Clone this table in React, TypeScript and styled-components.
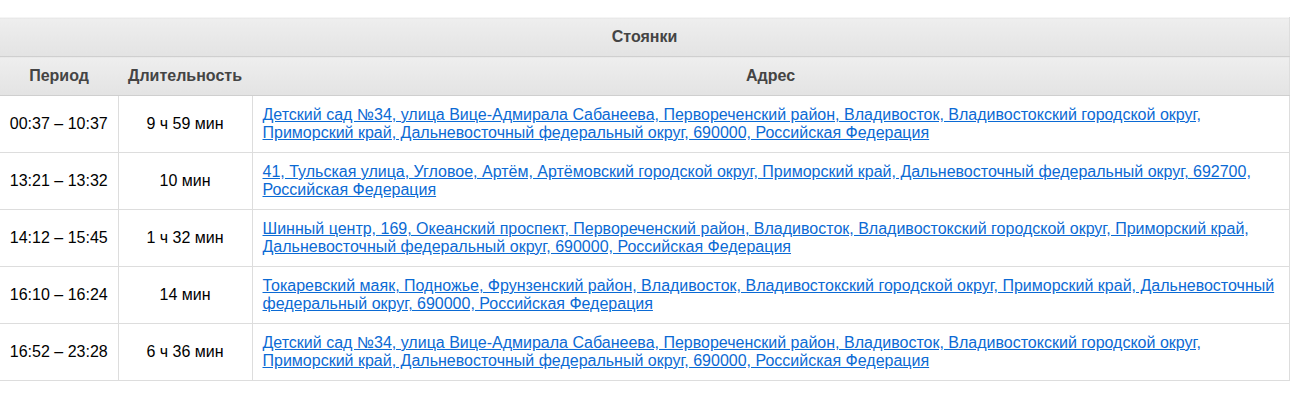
import React from "react";
import styled, { createGlobalStyle } from "styled-components";

const Global = createGlobalStyle`
  html, body { margin: 0; padding: 0; background: #fff; }
  body { font-family: "Liberation Sans", Arial, sans-serif; font-size: 16px; color: #000; }
`;

const Wrap = styled.div`
  padding-top: 17px;
  width: 1290px;
`;

const Table = styled.table`
  width: 100%;
  border-collapse: collapse;
  table-layout: fixed;
  font-family: "Liberation Sans", Arial, sans-serif;
  font-size: 16px;
  line-height: 18px;
`;

const HeadCell = styled.th`
  background: linear-gradient(#eeeeee, #e3e3e3);
  color: #444;
  font-weight: bold;
  font-size: 16px;
  text-align: center;
  padding: 10px 4px;
  height: 18px;
  white-space: nowrap;
  border-bottom: 1px solid #cfcfcf;
  border-top: 1px solid #f5f5f5;
  &:last-child { border-right: 1px solid #dddddd; }
`;

const Cell = styled.td<{ $address?: boolean }>`
  padding: ${(p) => (p.$address ? "10px 10px" : "10px 4px")};
  text-align: ${(p) => (p.$address ? "left" : "center")};
  white-space: ${(p) => (p.$address ? "normal" : "nowrap")};
  vertical-align: middle;
  border: 1px solid #dddddd;
  &:first-child { border-left: none; }
`;

const Link = styled.a`
  color: #0b6ad4;
  text-decoration: underline;
  cursor: pointer;
`;

const rows = [
  ["00:37 – 10:37", "9 ч 59 мин", "Детский сад №34, улица Вице-Адмирала Сабанеева, Первореченский район, Владивосток, Владивостокский городской округ, Приморский край, Дальневосточный федеральный округ, 690000, Российская Федерация"],
  ["13:21 – 13:32", "10 мин", "41, Тульская улица, Угловое, Артём, Артёмовский городской округ, Приморский край, Дальневосточный федеральный округ, 692700, Российская Федерация"],
  ["14:12 – 15:45", "1 ч 32 мин", "Шинный центр, 169, Океанский проспект, Первореченский район, Владивосток, Владивостокский городской округ, Приморский край, Дальневосточный федеральный округ, 690000, Российская Федерация"],
  ["16:10 – 16:24", "14 мин", "Токаревский маяк, Подножье, Фрунзенский район, Владивосток, Владивостокский городской округ, Приморский край, Дальневосточный федеральный округ, 690000, Российская Федерация"],
  ["16:52 – 23:28", "6 ч 36 мин", "Детский сад №34, улица Вице-Адмирала Сабанеева, Первореченский район, Владивосток, Владивостокский городской округ, Приморский край, Дальневосточный федеральный округ, 690000, Российская Федерация"],
];

export default function App() {
  return (
    <Wrap>
      <Global />
      <Table>
        <colgroup>
          <col style={{ width: 118 }} />
          <col style={{ width: 134 }} />
          <col />
        </colgroup>
        <thead>
          <tr>
            <HeadCell colSpan={3}>Стоянки</HeadCell>
          </tr>
          <tr>
            <HeadCell>Период</HeadCell>
            <HeadCell>Длительность</HeadCell>
            <HeadCell>Адрес</HeadCell>
          </tr>
        </thead>
        <tbody>
          {rows.map((r, i) => (
            <tr key={i}>
              <Cell>{r[0]}</Cell>
              <Cell>{r[1]}</Cell>
              <Cell $address>
                <Link href="#">{r[2]}</Link>
              </Cell>
            </tr>
          ))}
        </tbody>
      </Table>
    </Wrap>
  );
}
